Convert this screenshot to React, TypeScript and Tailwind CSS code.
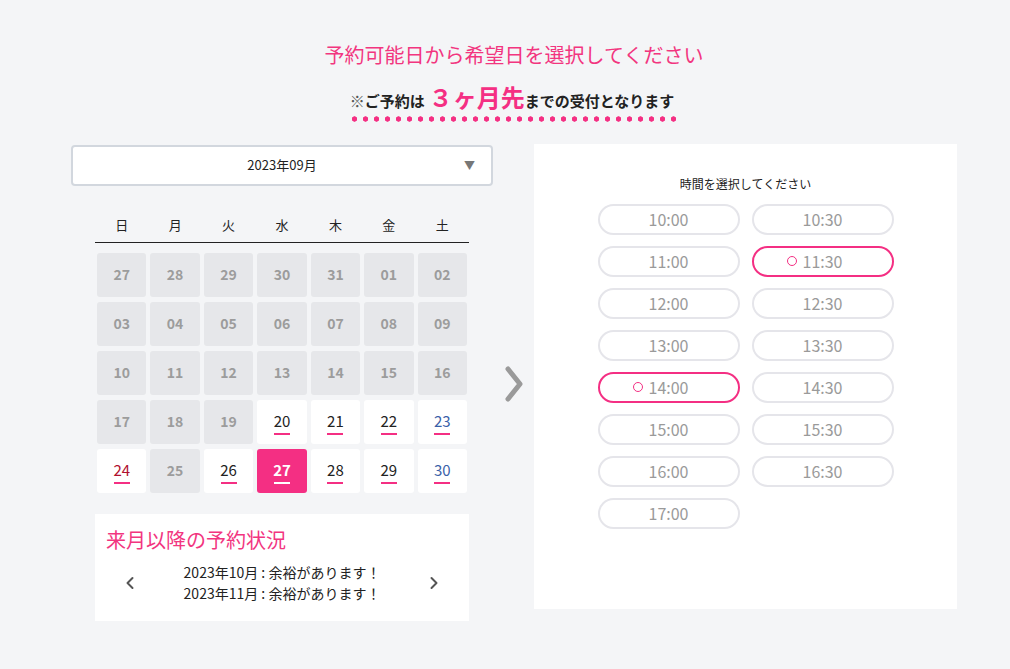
import { ChevronLeft, ChevronRight } from 'lucide-react';

type Day = { n: string; open: boolean; dow: number };

const days: Day[] = [
    '27', '28', '29', '30', '31', '01', '02',
    '03', '04', '05', '06', '07', '08', '09',
    '10', '11', '12', '13', '14', '15', '16',
    '17', '18', '19', '20', '21', '22', '23',
    '24', '25', '26', '27', '28', '29', '30',
].map((n, i) => ({
    n,
    dow: i % 7,
    open: i >= 24 && i !== 29,
}));

const weekdays = ['日', '月', '火', '水', '木', '金', '土'];

const times = [
    '10:00', '10:30', '11:00', '11:30', '12:00', '12:30', '13:00', '13:30',
    '14:00', '14:30', '15:00', '15:30', '16:00', '16:30', '17:00',
];
const marked = ['11:30', '14:00'];

function DayCell({ day, selected }: { day: Day; selected: boolean }) {
    if (!day.open) {
        return (
            <div className="flex h-[44px] items-center justify-center rounded-[3px] bg-[#e6e7ea] text-[14px] font-semibold text-[#9c9c9c]">
                {day.n}
            </div>
        );
    }
    if (selected) {
        return (
            <div className="flex h-[44px] flex-col items-center justify-center rounded-[3px] bg-[#f42f83] pt-[3px] text-[15px] font-bold text-white">
                <span className="leading-[18px]">{day.n}</span>
                <span className="mt-[3px] h-[2px] w-[16px] bg-white" />
            </div>
        );
    }
    const color = day.dow === 0 ? 'text-[#b0102f]' : day.dow === 6 ? 'text-[#3a5fa8]' : 'text-[#222]';
    return (
        <div className={`flex h-[44px] flex-col items-center justify-center rounded-[3px] bg-white pt-[3px] text-[15px] ${color}`}>
            <span className="leading-[18px]">{day.n}</span>
            <span className="mt-[3px] h-[2px] w-[16px] bg-[#f42f83]" />
        </div>
    );
}

function TimeButton({ time }: { time: string }) {
    const on = marked.includes(time);
    return (
        <button
            className={`flex h-[31px] items-center justify-center rounded-full border-2 bg-white text-[16px] text-[#9a9a9a] ${
                on ? 'border-[#f42f83]' : 'border-[#e5e5ea]'
            }`}
        >
            <span className="relative">
                {on && (
                    <span className="absolute right-full top-1/2 mr-[6px] h-[10px] w-[10px] -translate-y-1/2 rounded-full border-[1.5px] border-[#f42f83]" />
                )}
                {time}
            </span>
        </button>
    );
}

export default function App() {
    return (
        <div
            className="min-h-[669px] w-full bg-[#f4f5f7] pt-[40px]"
            style={{ fontFamily: '"Noto Sans CJK JP", "Noto Sans", sans-serif' }}
        >
            <div className="pl-[18px] text-center">
                <h1 className="text-[20px] leading-[30px] text-[#f2357f]">予約可能日から希望日を選択してください</h1>
                <div className="mt-[12px] flex justify-center">
                    <div className="flex flex-col items-center">
                        <p className="-ml-[4px] flex items-baseline font-bold text-[#222]">
                            <span className="text-[15px]">
                                <span className="font-normal text-[#555]">※</span>ご予約は
                            </span>
                            <span className="ml-[4px] text-[24px] leading-[30px] text-[#f42f83]">３ヶ月先</span>
                            <span className="text-[15px]">までの受付となります</span>
                        </p>
                        <div className="mt-[3px] h-[6px] w-[330px] bg-[radial-gradient(circle,#f42f83_2.4px,transparent_2.9px)] bg-[length:11px_6px] bg-repeat-x" />
                    </div>
                </div>
            </div>

            <div className="mt-[22px] flex items-start pl-[71px]">
                <div className="mt-[1px] w-[422px]">
                    <div className="relative flex h-[41px] items-center justify-center rounded-[4px] border-2 border-[#d2d7de] bg-white text-[13px] text-[#222]">
                        2023年09月
                        <span className="absolute right-[16px] top-1/2 -translate-y-1/2 text-[11px] text-[#777]">▼</span>
                    </div>

                    <div className="mx-[24px] mt-[29px]">
                        <div className="grid grid-cols-7 border-b border-[#222] pb-[7px]">
                            {weekdays.map((w) => (
                                <div key={w} className="text-center text-[13px] leading-[20px] text-[#222]">
                                    {w}
                                </div>
                            ))}
                        </div>
                        <div className="mt-[10px] grid grid-cols-7 gap-x-[4px] gap-y-[5px] px-[2px]">
                            {days.map((d, i) => (
                                <DayCell key={i} day={d} selected={i === 31} />
                            ))}
                        </div>

                        <div className="mt-[21px] h-[107px] bg-white px-[11px] pt-[12px]">
                            <h2 className="text-[20px] leading-[28px] text-[#f2357f]">来月以降の予約状況</h2>
                            <div className="mt-[8px] flex items-center justify-between px-[14px] text-[#555]">
                                <ChevronLeft size={20} strokeWidth={2.4} />
                                <div className="text-center text-[14px] leading-[21px] text-[#222]">
                                    <div>2023年10月 : 余裕があります！</div>
                                    <div>2023年11月 : 余裕があります！</div>
                                </div>
                                <ChevronRight size={20} strokeWidth={2.4} />
                            </div>
                        </div>
                    </div>
                </div>

                <div className="flex w-[41px] items-center justify-center self-stretch pt-[4px]">
                    <svg width="22" height="38" viewBox="0 0 22 38" fill="none">
                        <path d="M5 4 L17 19 L5 34" stroke="#9a9a9a" strokeWidth="5" strokeLinecap="round" strokeLinejoin="round" />
                    </svg>
                </div>

                <div className="h-[465px] w-[423px] bg-white pt-[31px]">
                    <p className="text-center text-[12px] leading-[18px] text-[#222]">時間を選択してください</p>
                    <div className="mx-auto mt-[11px] grid w-[296px] grid-cols-2 gap-x-[12px] gap-y-[11px]">
                        {times.map((t) => (
                            <TimeButton key={t} time={t} />
                        ))}
                    </div>
                </div>
            </div>
        </div>
    );
}
